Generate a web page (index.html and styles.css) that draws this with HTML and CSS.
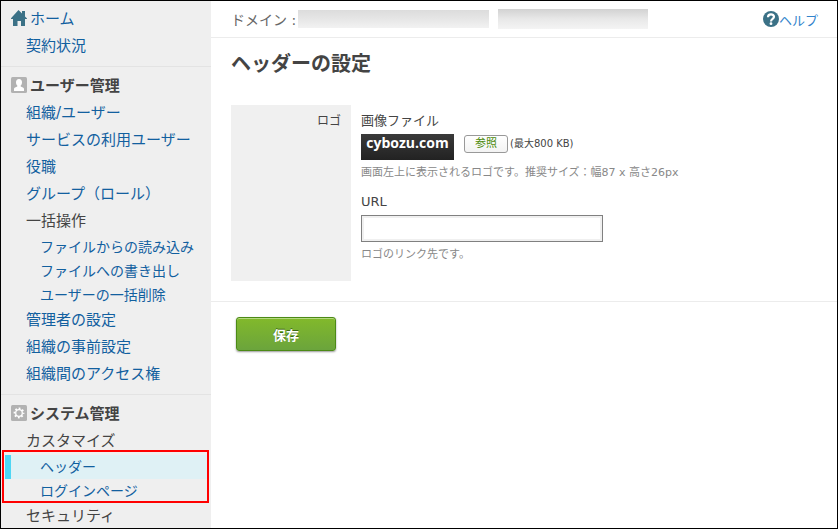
FILE: index.html
```html
<!DOCTYPE html>
<html lang="ja">
<head>
  <meta charset="UTF-8" />
  <meta name="viewport" content="width=device-width, initial-scale=1.0" />
  <title>ヘッダーの設定</title>
  <link rel="stylesheet" href="styles.css">
</head>
<body>
  <div class="app">
    <nav class="sidebar">
      <section class="nav-section">
        <div class="nav-title nav-home">
          <svg class="nav-icon" viewBox="0 0 16 16" aria-hidden="true">
            <path fill="#3b7186" d="M7.500 0L11 3.500V1h3v5.500l2 2V9h-2v7h-4v-5H6.500v5H2V9H0v-.8z" />
          </svg>
          <a href="#">ホーム</a>
        </div>
        <ul class="nav-list">
          <li><a href="#">契約状況</a></li>
        </ul>
      </section>

      <section class="nav-section">
        <h2 class="nav-title">
          <svg class="nav-icon" viewBox="0 0 16 16" aria-hidden="true">
            <rect width="16" height="16" rx="1.500" fill="#b2b2b2" />
            <path fill="#fff" d="M8 2c2 0 3 1.300 3 3.200 0 1.500-.5 2.600-1.300 3.300v1c1.500.5 3.300 1.100 3.300 2.500v2H3v-2c0-1.400 1.800-2 3.300-2.500v-1C5.500 7.800 5 6.700 5 5.200 5 3.300 6 2 8 2z" />
          </svg>
          ユーザー管理
        </h2>
        <ul class="nav-list">
          <li><a href="#">組織/ユーザー</a></li>
          <li><a href="#">サービスの利用ユーザー</a></li>
          <li><a href="#">役職</a></li>
          <li><a href="#">グループ（ロール）</a></li>
          <li>
            <span>一括操作</span>
            <ul class="nav-sublist">
              <li><a href="#">ファイルからの読み込み</a></li>
              <li><a href="#">ファイルへの書き出し</a></li>
              <li><a href="#">ユーザーの一括削除</a></li>
            </ul>
          </li>
          <li><a href="#">管理者の設定</a></li>
          <li><a href="#">組織の事前設定</a></li>
          <li><a href="#">組織間のアクセス権</a></li>
        </ul>
      </section>

      <section class="nav-section">
        <h2 class="nav-title">
          <svg class="nav-icon" viewBox="0 0 16 16" aria-hidden="true">
            <rect width="16" height="16" rx="1.500" fill="#b2b2b2" />
            <circle cx="8" cy="8" r="3.300" fill="none" stroke="#fff" stroke-width="1.300" />
            <circle cx="8" cy="8" r="4.600" fill="none" stroke="#fff" stroke-width="1.600" stroke-dasharray="1.806 1.806" stroke-dashoffset=".9" />
          </svg>
          システム管理
        </h2>
        <ul class="nav-list">
          <li>
            <span>カスタマイズ</span>
            <ul class="nav-sublist marked">
              <li class="active"><a href="#">ヘッダー</a></li>
              <li><a href="#">ログインページ</a></li>
            </ul>
          </li>
          <li><span>セキュリティ</span></li>
        </ul>
      </section>
    </nav>

    <main class="content">
      <header class="topbar">
        <span>ドメイン :</span>
        <span class="masked masked-domain"></span>
        <span class="masked masked-user"></span>
        <a class="help" href="#">
          <svg class="help-icon" viewBox="0 0 16 16" aria-hidden="true">
            <circle cx="8" cy="8" r="8" fill="#3b7186" />
            <path fill="none" stroke="#fff" stroke-width="2.200" d="M5 6.200C5 2.500 11 2.600 11 5.800 11 8 8 7.800 8 10.500" />
            <circle cx="8" cy="12.700" r="1.400" fill="#fff" />
          </svg>ヘルプ</a>
      </header>

      <form class="settings">
        <h1>ヘッダーの設定</h1>
        <div class="form-row">
          <div class="row-name">ロゴ</div>
          <div class="row-fields">
            <span class="field-label">画像ファイル</span>
            <div class="file-field">
              <span class="logo">cybozu.com</span>
              <button class="browse" type="button">参照</button>
              <span class="limit">(最大800 KB)</span>
            </div>
            <p class="note">画面左上に表示されるロゴです。推奨サイズ：幅87 x 高さ26px</p>
            <label class="field-label url-label" for="logoUrl">URL</label>
            <input class="url-input" type="text" id="logoUrl" />
            <p class="note">ロゴのリンク先です。</p>
          </div>
        </div>
        <div class="actions">
          <button class="save" type="submit">保存</button>
        </div>
      </form>
    </main>
  </div>
</body>
</html>
```

FILE: styles.css
```css
* {
  margin: 0;
  padding: 0;
  box-sizing: border-box;
}

body {
  font-family: "DejaVu Sans", "Noto Sans CJK JP", sans-serif;
  font-size: 13px;
  color: #444;
  background: #fff;
}

a {
  color: #12609f;
  text-decoration: none;
}

a:hover {
  text-decoration: underline;
}

ul {
  list-style: none;
}

.app {
  display: flex;
  height: 100vh;
  border: 1px solid #000;
  overflow: hidden;
}

/* sidebar */
.sidebar {
  width: 210px;
  flex-shrink: 0;
  padding-top: 5px;
  background: #efefef;
  font-size: 15px;
  line-height: 27px;
  overflow: hidden;
}

.nav-section {
  padding-bottom: 6px;
}

.nav-section + .nav-section {
  padding-top: 6px;
  border-top: 1px solid #e3e3e3;
}

.nav-title {
  display: flex;
  align-items: center;
  gap: 3px;
  padding-left: 10px;
  font-size: 15px;
  font-weight: bold;
}

.nav-home {
  font-weight: normal;
}

.nav-icon {
  width: 16px;
  height: 16px;
  margin-bottom: 3px;
}

.nav-list > li > a,
.nav-list > li > span {
  display: block;
  padding-left: 25px;
}

.nav-sublist {
  font-size: 14px;
  line-height: 24px;
}

.nav-sublist a {
  display: block;
  margin: 0 4px;
  padding-left: 35px;
}

.nav-sublist .active a {
  padding-left: 29px;
  border-left: 6px solid #4dd6f4;
  background: #dff1f5;
}

.marked {
  position: relative;
}

.marked::after {
  content: "";
  position: absolute;
  inset: -5px 2px 0 1px;
  border: 2px solid #f00;
  pointer-events: none;
}

/* main area */
.content {
  flex: 1;
  min-width: 0;
}

.topbar {
  display: flex;
  align-items: center;
  height: 37px;
  padding: 0 19px 0 20px;
  border-bottom: 1px solid #ececec;
  font-size: 14px;
  color: #666;
}

.masked {
  background: linear-gradient(#d2d2d2, #e8e8e8 50%, #f4f4f4);
}

.masked-domain {
  width: 191px;
  height: 18px;
  margin-left: 2px;
  background: linear-gradient(#dcdcdc, #e6e6e6 50%, #f2f2f2);
}

.masked-user {
  width: 150px;
  height: 20px;
  margin-left: 9px;
}

.help {
  display: flex;
  align-items: center;
  margin-left: auto;
  font-size: 13px;
  color: #3284cc;
}

.help-icon {
  width: 16px;
  height: 16px;
}

.settings h1 {
  padding: 12px 20px 27px;
  font-size: 20px;
  line-height: 28px;
}

.form-row {
  display: flex;
  margin: 0 20px 20px;
  line-height: 20px;
}

.row-name {
  width: 120px;
  padding: 6px 10px;
  background: #f0f0f0;
  font-size: 12px;
  text-align: right;
}

.row-fields {
  flex: 1;
  padding: 6px 0 18px 10px;
}

.field-label {
  display: block;
  margin-bottom: 3px;
}

.url-label {
  margin-top: 11px;
}

.file-field {
  display: flex;
  align-items: flex-start;
}

.logo {
  width: 93px;
  height: 26px;
  background: linear-gradient(#3a3a3a, #222);
  color: #fff;
  font-family: "Open Sans", sans-serif;
  font-size: 14px;
  font-weight: bold;
  line-height: 18px;
  text-align: center;
}

.browse {
  width: 44px;
  height: 18px;
  margin: 1px 2px 0 10px;
  border: 1px solid #999;
  border-radius: 3px;
  background: linear-gradient(#fff, #f3f3f3);
  color: #4b8a08;
  font-family: inherit;
  font-size: 11px;
  line-height: 16px;
}

.limit {
  font-size: 10px;
}

.note {
  margin-top: 5px;
  font-size: 11px;
  line-height: 16px;
  color: #888;
}

.url-input {
  display: block;
  width: 242px;
  height: 27px;
  padding: 0 6px;
  border: 1px solid #808080;
  box-shadow: inset 0 0 0 2px #f0f0f0;
  font-family: inherit;
  font-size: 13px;
}

.actions {
  padding: 15px 25px;
  border-top: 1px solid #ececec;
}

.save {
  width: 100px;
  height: 34px;
  border: 1px solid #4c8a16;
  border-radius: 3px;
  background: linear-gradient(#82b92b, #6ba43c);
  box-shadow: inset 0 1px 0 #b5d97f, 0 1px 2px rgba(0, 0, 0, 0.4);
  color: #fff;
  font-family: inherit;
  font-size: 13px;
  font-weight: bold;
  text-shadow: 0 -1px 0 #3c6a12;
  cursor: pointer;
}
```
